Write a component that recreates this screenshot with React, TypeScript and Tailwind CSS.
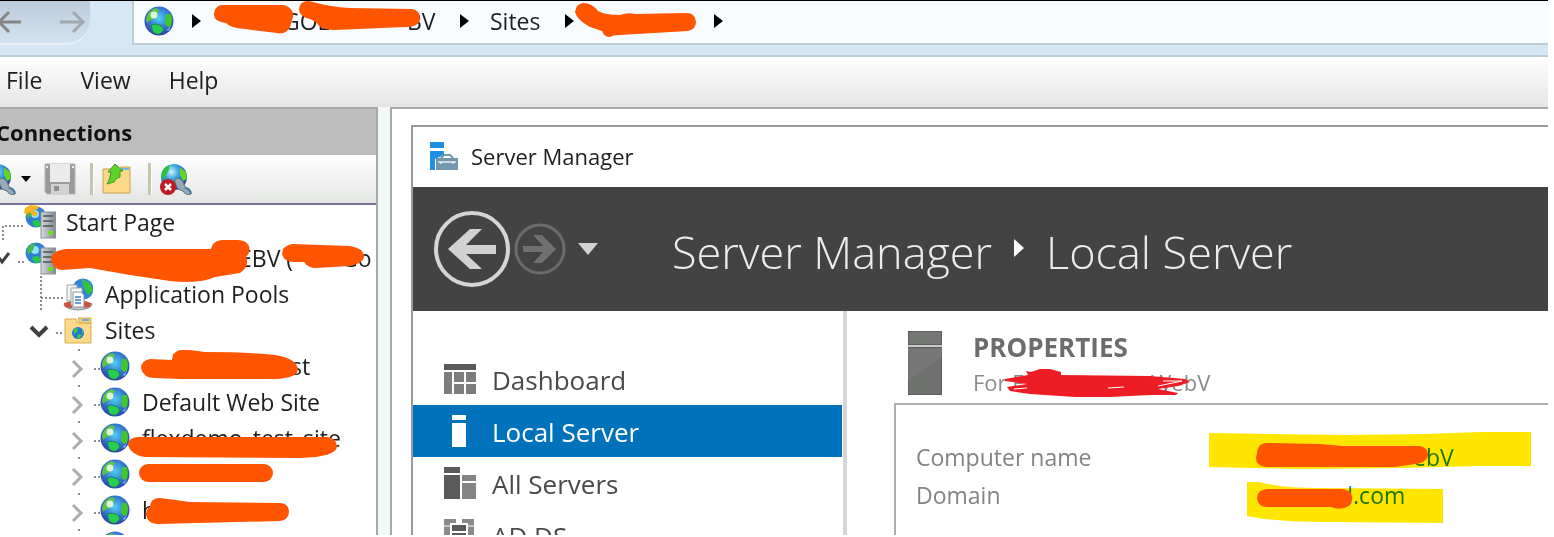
import type { ReactNode } from "react";

/* ===== Icons ===== */

function GlobeIcon({ id, size = 30 }: { id: string; size?: number }) {
	return (
		<svg width={size} height={size} viewBox="0 0 30 30" className="block shrink-0" aria-hidden="true">
			<defs>
				<radialGradient id={id} cx="0.5" cy="0.4" r="0.6">
					<stop offset="0" stopColor="#4fd0f4" />
					<stop offset="0.5" stopColor="#3a86d8" />
					<stop offset="1" stopColor="#2a3fae" />
				</radialGradient>
			</defs>
			<circle cx="15" cy="15" r="14.500" fill={`url(#${id})`} />
			<path d="M2 13Q4 4 12 2L15 4L13 9L10 13L5 15L3 17Z" fill="#5fc24a" />
			<path d="M22 8L27 8L28 14L27 20L24 21L21 18Z" fill="#3fc828" />
			<path d="M7 19L12 18L18 20L20 24L16 28Q12 29 9 26Z" fill="#27cf50" stroke="#1d6f58" strokeWidth="0.8" />
			<circle cx="10" cy="9" r="3.500" fill="#f2fff0" opacity="0.85" />
			<path d="M22 24L27 20L25 25Z" fill="#62a8e4" />
		</svg>
	);
}

function ServerIcon({ id, start = false }: { id: string; start?: boolean }) {
	return (
		<svg width="32" height="34" viewBox="0 0 32 34" className="block shrink-0" aria-hidden="true">
			<defs>
				<linearGradient id={id} x1="0" y1="0" x2="1" y2="0">
					<stop offset="0" stopColor="#d5d9dc" />
					<stop offset="1" stopColor="#7f8990" />
				</linearGradient>
			</defs>
			<circle cx="12" cy="12" r="10.500" fill="#2f7ed6" />
			<circle cx="11" cy="9" r="4" fill="#8fe2f8" />
			<path d="M3 9Q5 3 11 2L9 9L4 14Z" fill="#49b84a" />
			<path d="M8 16L14 15L18 19L14 22Q9 22 8 16Z" fill="#23c848" />
			{start && <path d="M1 3L6 0L15 1L14 4L10 5L14 9L11 12L5 7L3 10L0 8Z" fill="#f8b420" />}
			<rect x="17" y="7" width="14.500" height="26" fill={`url(#${id})`} stroke="#8a9297" />
			<path d="M19 11H29M19 16H29M19 21H29" stroke="#4d565c" strokeWidth="1.500" />
			<rect x="24" y="26" width="5" height="4" fill="#6fe01c" />
		</svg>
	);
}

function PoolsIcon() {
	return (
		<svg width="30" height="34" viewBox="0 0 30 34" className="block shrink-0" aria-hidden="true">
			<circle cx="20" cy="12" r="10.500" fill="#3087d8" />
			<path d="M19 2L27 6L30 14L25 18L20 9Z" fill="#35c23c" />
			<path d="M1 27Q15 20 29 27Q29 32 15 33Q1 32 1 27Z" fill="#b9c2c4" stroke="#8a9497" />
			<path d="M1 26L9 24L9 31L2 30ZM21 24L28 26L27 30L21 31Z" fill="#d2503c" />
			<path d="M4 8H14V24H4Z" fill="#f4f4f2" stroke="#9fa5a8" />
			<path d="M8 11H19V28H8Z" fill="#f8f8f7" stroke="#9fa5a8" />
			<path d="M10 15H18L21 18V30H10Z" fill="#fff" stroke="#8d9498" />
			<path d="M12 20H18M12 23H18M12 26H18" stroke="#3a80c8" strokeWidth="1.500" />
		</svg>
	);
}

function SitesIcon() {
	return (
		<svg width="30" height="30" viewBox="0 0 30 30" className="block shrink-0" aria-hidden="true">
			<path d="M2 4H13L15 8H28V28H2Z" fill="#fbd98a" stroke="#d6ab4e" />
			<path d="M15 3H28V8H17Z" fill="#f7cf74" stroke="#d6ab4e" />
			<path d="M19 5H26" stroke="#6fa8dc" strokeWidth="2" />
			<circle cx="15" cy="18" r="6" fill="#2677cf" />
			<path d="M11 14L15 13L14 17L11 19ZM15 19L19 20L16 24L14 22ZM19 14L21 18L19 18Z" fill="#2fd04a" />
		</svg>
	);
}

function ConnectIcon({ id, removed = false }: { id: string; removed?: boolean }) {
	return (
		<svg width="33" height="33" viewBox="0 0 33 33" className="block shrink-0" aria-hidden="true">
			<defs>
				<radialGradient id={id} cx="0.4" cy="0.3" r="0.7">
					<stop offset="0" stopColor="#c5f4fb" />
					<stop offset="0.4" stopColor="#3da4df" />
					<stop offset="1" stopColor="#2340a5" />
				</radialGradient>
			</defs>
			<circle cx="14" cy="14" r="13" fill={`url(#${id})`} />
			<path d="M1 13Q3 4 9 2L9 7L6 12L3 17Z" fill="#2cc23a" />
			<path d="M20 5L26 9L27 16L23 18L20 12Z" fill="#62d622" />
			<path
				d="M15 20Q14 15 19 15Q24 18 25 24Q30 26 31 31Q26 33 23 28L18 26Z"
				fill="#9aa9b3"
				stroke="#5d6e7b"
			/>
			<path d="M25 25Q30 25 31 31" stroke="#3f7da0" strokeWidth="2" fill="none" />
			{removed && (
				<>
					<circle cx="8" cy="24" r="8" fill="#c01c24" />
					<path d="M5 21L11 27M11 21L5 27" stroke="#fff" strokeWidth="2.500" />
				</>
			)}
		</svg>
	);
}

function SaveIcon() {
	return (
		<svg width="32" height="32" viewBox="0 0 32 32" className="block" aria-hidden="true">
			<path d="M1 1H31V31H3L1 29Z" fill="#9a9a9a" stroke="#b5b5b5" />
			<rect x="6" y="1" width="20" height="18" fill="#ebebeb" />
			<rect x="7" y="21" width="18" height="10" fill="#d2d2d2" />
			<rect x="10" y="23" width="5" height="5" fill="#8f8f8f" />
			<path d="M2 4H4M28 4H30" stroke="#eee" strokeWidth="2" />
		</svg>
	);
}

function UpFolderIcon() {
	return (
		<svg width="30" height="32" viewBox="0 0 30 32" className="block" aria-hidden="true">
			<path d="M1 6H17L19 4H28V30H1Z" fill="#fbd989" stroke="#caa24a" />
			<path d="M19 6H27" stroke="#7db1dd" strokeWidth="2" />
			<path d="M13 1L21 8H18V14Q13 15 12 19L5 21Q8 17 9 9H6Z" fill="#5fd32c" stroke="#3a9a2a" />
		</svg>
	);
}

function ServerManagerIcon() {
	return (
		<svg width="29" height="29" viewBox="0 0 29 29" className="block shrink-0" aria-hidden="true">
			<path d="M0 0H14V6H0ZM0 9H14V13L5 17V28H0Z" fill="#1e90e0" />
			<path d="M11 16L14 13H20L23 16" fill="none" stroke="#7296ab" strokeWidth="2" />
			<rect x="6" y="16" width="22" height="12" fill="#7296ab" />
			<path d="M8 20H26M11 20V22M23 20V22" stroke="#e8f0f4" strokeWidth="1.500" />
		</svg>
	);
}

function DashboardIcon() {
	return (
		<svg width="32" height="31" viewBox="0 0 32 31" aria-hidden="true">
			<rect width="32" height="6" fill="#5a5a5a" />
			<path d="M0 8H8V30H0ZM10 8H20V18H10ZM22 8H32V18H22ZM10 20H20V30H10ZM22 20H32V30H22Z" fill="#7d7d7d" />
		</svg>
	);
}

function LocalServerIcon() {
	return (
		<svg width="32" height="32" viewBox="0 0 32 32" aria-hidden="true">
			<path d="M8 0H22V5H8ZM8 8H22V32H8Z" fill="#fff" />
		</svg>
	);
}

function AllServersIcon() {
	return (
		<svg width="32" height="32" viewBox="0 0 32 32" aria-hidden="true">
			<path d="M0 0H16V6H0ZM0 8H16V32H0Z" fill="#5a5a5a" />
			<path d="M18 8H32V14H18ZM18 16H32V32H18Z" fill="#858585" />
		</svg>
	);
}

function AdDsIcon() {
	return (
		<svg width="32" height="32" viewBox="0 0 32 32" aria-hidden="true">
			<path d="M0 0H12V4H6V32H0ZM18 0H30V32H24V4H18Z" fill="#8a8a8a" />
			<path d="M0 7H6M24 7H30" stroke="#fff" />
			<path d="M8 6H22V12H8ZM8 14H22V30H8Z" fill="#5a5a5a" />
		</svg>
	);
}

function Arrow() {
	return (
		<svg width="9" height="14" viewBox="0 0 9 14" className="block shrink-0" aria-hidden="true">
			<path d="M0 0L9 7L0 14Z" fill="#000" />
		</svg>
	);
}

/* ===== Connections tree ===== */

type Row = { depth: number; label: string; icon: ReactNode; lead: ReactNode; pad?: string };

const dots = { stroke: "#8c8c8c", strokeWidth: 2, strokeDasharray: "2 2", fill: "none" };

const siteLead = (
	<svg width="100" height="36" aria-hidden="true">
		<path d="M73 13L81 21L73 29" fill="none" stroke="#adadad" strokeWidth="3" />
		<path d="M94 21H100M78 2H80" {...dots} />
	</svg>
);

const rows: Row[] = [
	{
		depth: 1,
		label: "Start Page",
		icon: <ServerIcon id="srv-start" start />,
		lead: (
			<svg width="24" height="36" aria-hidden="true">
				<path d="M3 36V22H24" {...dots} />
			</svg>
		),
	},
	{
		depth: 1,
		label: "EBV (        Go",
		icon: <ServerIcon id="srv-host" />,
		pad: "pl-[183px]",
		lead: (
			<svg width="24" height="36" aria-hidden="true">
				<path d="M-1 18L2 22L9 13" fill="none" stroke="#404040" strokeWidth="3" />
				<path d="M18 22H24" {...dots} />
			</svg>
		),
	},
	{
		depth: 2,
		label: "Application Pools",
		icon: <PoolsIcon />,
		lead: (
			<svg width="63" height="36" aria-hidden="true">
				<path d="M41 0V36M41 22H63" {...dots} />
			</svg>
		),
	},
	{
		depth: 2,
		label: "Sites",
		icon: <SitesIcon />,
		lead: (
			<svg width="63" height="36" aria-hidden="true">
				<path d="M31 15L39 23L47 15" fill="none" stroke="#404040" strokeWidth="4" />
				<path d="M56 21H63" {...dots} />
			</svg>
		),
	},
	{ depth: 3, label: "st", icon: <GlobeIcon id="g1" />, lead: siteLead, pad: "pl-[161px]" },
	{ depth: 3, label: "Default Web Site", icon: <GlobeIcon id="g2" />, lead: siteLead },
	{ depth: 3, label: "flexdemo_test_site", icon: <GlobeIcon id="g3" />, lead: siteLead },
	{ depth: 3, label: "", icon: <GlobeIcon id="g4" />, lead: siteLead },
	{ depth: 3, label: "h", icon: <GlobeIcon id="g5" />, lead: siteLead },
	{ depth: 3, label: "", icon: <GlobeIcon id="g6" />, lead: siteLead },
];

function Connections() {
	return (
		<aside className="flex w-[378px] shrink-0 flex-col overflow-hidden border-t-2 border-r-2 border-[#a8aaa9] bg-white">
			<h2 className="h-[46px] shrink-0 bg-[#bdbdbd] text-[22px] leading-[46px] font-bold text-[#111]">
				<span className="-ml-1">Connections</span>
			</h2>
			<div className="flex h-[50px] shrink-0 items-center border-b-2 border-[#78739a] bg-linear-to-b from-white to-[#e4e6e4]">
				<button aria-label="Connect" className="-ml-4 flex items-center gap-1">
					<ConnectIcon id="conn" />
					<svg width="10" height="6" aria-hidden="true">
						<path d="M0 0H10L5 6Z" fill="#000" />
					</svg>
				</button>
				<button aria-label="Save" className="ml-[13px]">
					<SaveIcon />
				</button>
				<span className="ml-[14px] h-8 w-1 border-r border-white bg-[#c4c6ac]" />
				<button aria-label="Up" className="ml-2">
					<UpFolderIcon />
				</button>
				<span className="ml-4 h-8 w-1 border-r border-white bg-[#c4c6ac]" />
				<button aria-label="Delete connection" className="ml-2">
					<ConnectIcon id="disc" removed />
				</button>
			</div>
			<ul className="overflow-hidden">
				{rows.map((row, i) => (
					<li key={i} className="flex h-9 items-center pb-[2px] whitespace-nowrap">
						<button aria-label="Expand" className="shrink-0">
							{row.lead}
						</button>
						{row.icon}
						<span className={row.pad ?? (row.depth === 1 ? "pl-[10px]" : "pl-3")}>
							<span className="text-[23px] leading-8 whitespace-pre text-[#1e1e1e]">{row.label}</span>
						</span>
					</li>
				))}
			</ul>
		</aside>
	);
}

/* ===== Server Manager window ===== */

const navItems = [
	{ label: "Dashboard", icon: <DashboardIcon /> },
	{ label: "Local Server", icon: <LocalServerIcon />, active: true },
	{ label: "All Servers", icon: <AllServersIcon /> },
	{ label: "AD DS", icon: <AdDsIcon /> },
];

function ServerManager() {
	return (
		<section className="flex min-w-0 flex-1 flex-col overflow-hidden border-t-2 border-l-2 border-[#999] bg-white">
			<div className="flex h-[60px] shrink-0 items-center gap-3 pb-[2px] pl-[17px]">
				<ServerManagerIcon />
				<h1 className="text-[22px] leading-8 text-[#1e1e1e]">Server Manager</h1>
			</div>

			<header className="flex h-[124px] shrink-0 items-center bg-[#434343] pl-[21px] whitespace-nowrap">
				<button aria-label="Back">
					<svg width="76" height="76" viewBox="0 0 76 76" className="block" aria-hidden="true">
						<circle cx="38" cy="38" r="36" fill="none" stroke="#d4d6d4" strokeWidth="4" />
						<path d="M14 38L36 18H48L32 34H62V43H32L48 58H36Z" fill="#d0d3d0" />
					</svg>
				</button>
				<button aria-label="Forward" className="ml-1">
					<svg width="52" height="52" viewBox="0 0 52 52" className="block" aria-hidden="true">
						<circle cx="26" cy="26" r="24" fill="none" stroke="#6a6c6a" strokeWidth="3" />
						<path d="M42 26L28 12H19L29 23H9V29H29L19 40H28Z" fill="#6f716f" />
					</svg>
				</button>
				<button aria-label="History" className="ml-3">
					<svg width="20" height="12" className="block" aria-hidden="true">
						<path d="M0 0H20L10 12Z" fill="#d0d3d0" />
					</svg>
				</button>
				<div className="ml-[74px] flex items-center pt-[6px] text-[45px] leading-[60px] font-light text-[#ececec]">
					<span>Server Manager</span>
					<svg width="10" height="18" className="mx-[22px] mb-2" aria-hidden="true">
						<path d="M0 0L10 9L0 18Z" fill="#fff" />
					</svg>
					<span>Local Server</span>
				</div>
			</header>

			<div className="flex min-h-0 flex-1">
				<nav className="w-[434px] shrink-0 overflow-hidden border-r-4 border-[#d6d6d6] pt-[42px]">
					{navItems.map((item) => (
						<a
							key={item.label}
							href="#"
							className={
								item.active
									? "mr-px flex h-[52px] items-center gap-4 bg-[#0072bc] pl-[31px] text-[26px] leading-8 text-white"
									: "mr-px flex h-[52px] items-center gap-4 pl-[31px] text-[26px] leading-8 text-[#4a4a4a]"
							}>
							{item.icon}
							<span className="pt-[2px]">{item.label}</span>
						</a>
					))}
				</nav>

				<div className="flex min-w-0 flex-1 flex-col pt-5 pl-[47px]">
					<div className="flex gap-[31px] pl-[14px]">
						<svg width="34" height="64" viewBox="0 0 34 64" className="shrink-0" aria-hidden="true">
							<path d="M0 0H34V14H0Z" fill="#737673" stroke="#5e605e" strokeWidth="2" />
							<path d="M0 17H34V64H0Z" fill="#6e716e" stroke="#5e605e" strokeWidth="2" />
							<path d="M0 17H34V26L0 50Z" fill="#7c7c7c" opacity="0.6" />
							<path d="M0 15H34" stroke="#c8cac8" strokeWidth="2" />
						</svg>
						<div>
							<h2 className="text-[26px] leading-8 font-bold text-[#6a6d6a]">PROPERTIES</h2>
							<p className="flex text-[22px] leading-[38px] text-[#8a8a8a]">
								<span className="w-[178px]">For F</span>
								<span>WebV</span>
							</p>
						</div>
					</div>
					<dl className="mt-[2px] grid flex-1 auto-rows-[38px] grid-cols-[341px_1fr] border-t-2 border-l-2 border-[#adadad] pt-[33px] pl-5 text-[23px] leading-[38px] text-[#838383]">
						<dt>Computer name</dt>
						<dd className="pl-[156px]">
							<a href="#" className="text-[#1f7fc4]">
								ebV
							</a>
						</dd>
						<dt>Domain</dt>
						<dd className="pl-[82px]">
							<a href="#" className="text-[#1f7fc4]">
								d.com
							</a>
						</dd>
					</dl>
				</div>
			</div>
		</section>
	);
}

/* ===== Freehand ink over the page ===== */

function Ink() {
	return (
		<>
			<svg
				width="1554"
				height="537"
				className="pointer-events-none absolute top-0 left-0 mix-blend-multiply"
				aria-hidden="true">
				<path d="M1209 433L1345 435L1425 434L1480 432H1531V466H1480L1400 468L1300 469L1209 467Z" fill="#ffe600" />
				<path d="M1247 482H1259Q1280 488 1320 488L1443 489V523L1330 522Q1275 522 1247 516Z" fill="#ffe600" />
			</svg>
			<svg width="1554" height="537" className="pointer-events-none absolute top-0 left-0" aria-hidden="true">
				<g fill="#ff5500">
					<path d="M222 5H284Q294 8 293 17L290 27Q286 35 277 33L245 29Q230 28 226 23Q213 22 214 13Q216 5 222 5Z" />
					<path d="M309 1Q299 1 299 10Q300 17 310 19Q317 22 319 26Q325 30 335 30L405 27Q419 27 420 19Q420 10 412 9L350 8Q330 7 309 1Z" />
					<path d="M583 3Q576 4 575 12Q577 20 590 27L602 31Q604 37 610 37Q612 35 620 35L688 31Q696 29 696 22Q695 13 687 13L635 14Q628 12 620 15Q605 15 598 11Q592 3 583 3Z" />
					<path d="M66 249Q51 251 51 259Q52 269 62 270L90 268L130 275L170 281Q200 284 215 277L240 273Q250 266 246 257Q251 252 249 246Q246 240 238 240H222Q212 241 211 249Z" />
					<path d="M292 244Q282 246 282 254Q284 262 294 262H304Q308 268 316 268L350 266Q364 263 364 256Q363 248 350 246Z" />
					<path d="M150 359Q141 361 141 368Q143 378 155 378L180 379H275Q298 378 298 369Q296 358 275 355Q245 352 205 352L190 350H180Q172 352 172 360Z" />
					<path d="M137 437Q128 438 128 445Q131 455 145 457L300 458Q337 457 337 446Q336 438 328 437Z" />
					<rect x="139" y="464" width="134" height="18" rx="9" />
					<path d="M160 498Q150 498 150 507Q146 509 146 515Q148 524 158 524L280 521Q289 520 289 511Q288 503 280 503L190 502Q170 499 160 498Z" />
					<path d="M1266 443L1320 444L1343 446H1420Q1429 448 1428 456Q1426 463 1415 464L1395 467H1266Q1256 466 1256 458L1257 453Q1258 443 1266 443Z" />
					<path d="M1267 489Q1257 490 1257 498Q1258 507 1267 507H1331Q1340 511 1349 506Q1353 502 1352 496Q1350 489 1341 489Z" />
				</g>
				<path
					d="M1005 379L1028 375L1026 371L1031 372L1040 369H1050L1061 372V375L1150 376L1185 379L1190 382L1178 386L1158 389L1178 393L1176 395H1150L1110 397H1075L1060 396L1030 394L1010 391L1007 387L1027 384L1005 381Z"
					fill="#ee1c24"
				/>
				<path d="M1014 389L1027 388M1163 381L1182 381L1158 386M1108 388L1124 387" fill="none" stroke="#fff" />
			</svg>
		</>
	);
}

export default function App() {
	return (
		<div className="relative flex h-screen flex-col overflow-hidden bg-white pr-[6px] pb-[2px] font-['Open_Sans','Noto_Sans',sans-serif]">
			{/* ===== Address bar ===== */}
			<div className="flex h-[57px] shrink-0 border-t border-b-2 border-t-black border-b-[#bccdd4] bg-[#d6e8f6] pb-[10px]">
				<div className="flex w-[90px] shrink-0 items-center justify-between rounded-br-3xl border-b-2 border-[#e9f2f9] bg-linear-to-b from-[#bccbdc] to-[#d3e3f0] pr-1">
					<button aria-label="Back" className="-ml-1">
						<svg width="25" height="24" aria-hidden="true">
							<path d="M25 12H4M13 2L3 12L13 22" fill="none" stroke="#858585" strokeWidth="3" />
						</svg>
					</button>
					<button aria-label="Forward">
						<svg width="26" height="24" aria-hidden="true">
							<path d="M0 12H23M13 2L23 12L13 22" fill="none" stroke="#a0a7ae" strokeWidth="3" />
						</svg>
					</button>
				</div>
				<div className="ml-[42px] flex min-w-0 flex-1 items-center border-b-2 border-l-2 border-[#bccdd4] bg-[#f9fcff] pb-[2px] pl-[10px] text-[23px] leading-8 text-[#1e1e1e]">
					<GlobeIcon id="g0" />
					<span className="ml-[18px]">
						<Arrow />
					</span>
					<span className="ml-[82px] w-[124px]">GOL</span>
					<span className="w-[53px]">BV</span>
					<span className="mr-[21px]">
						<Arrow />
					</span>
					<span className="mr-6">Sites</span>
					<Arrow />
					<span className="ml-[140px]">
						<Arrow />
					</span>
				</div>
			</div>

			{/* ===== Menu ===== */}
			<div className="flex h-[50px] shrink-0 items-center gap-[38px] bg-linear-to-b from-white to-[#e4e5e4] pb-1 pl-[6px] text-[23px] leading-8 text-[#1e1e1e]">
				<button>File</button>
				<button>View</button>
				<button>Help</button>
			</div>

			<div className="flex min-h-0 flex-1 gap-3 bg-[#f3f9f6]">
				<Connections />
				<main className="flex min-w-0 flex-1 border-t-2 border-l-2 border-[#a8aaa9] bg-white pt-4 pl-[19px]">
					<ServerManager />
				</main>
			</div>

			<Ink />
		</div>
	);
}
